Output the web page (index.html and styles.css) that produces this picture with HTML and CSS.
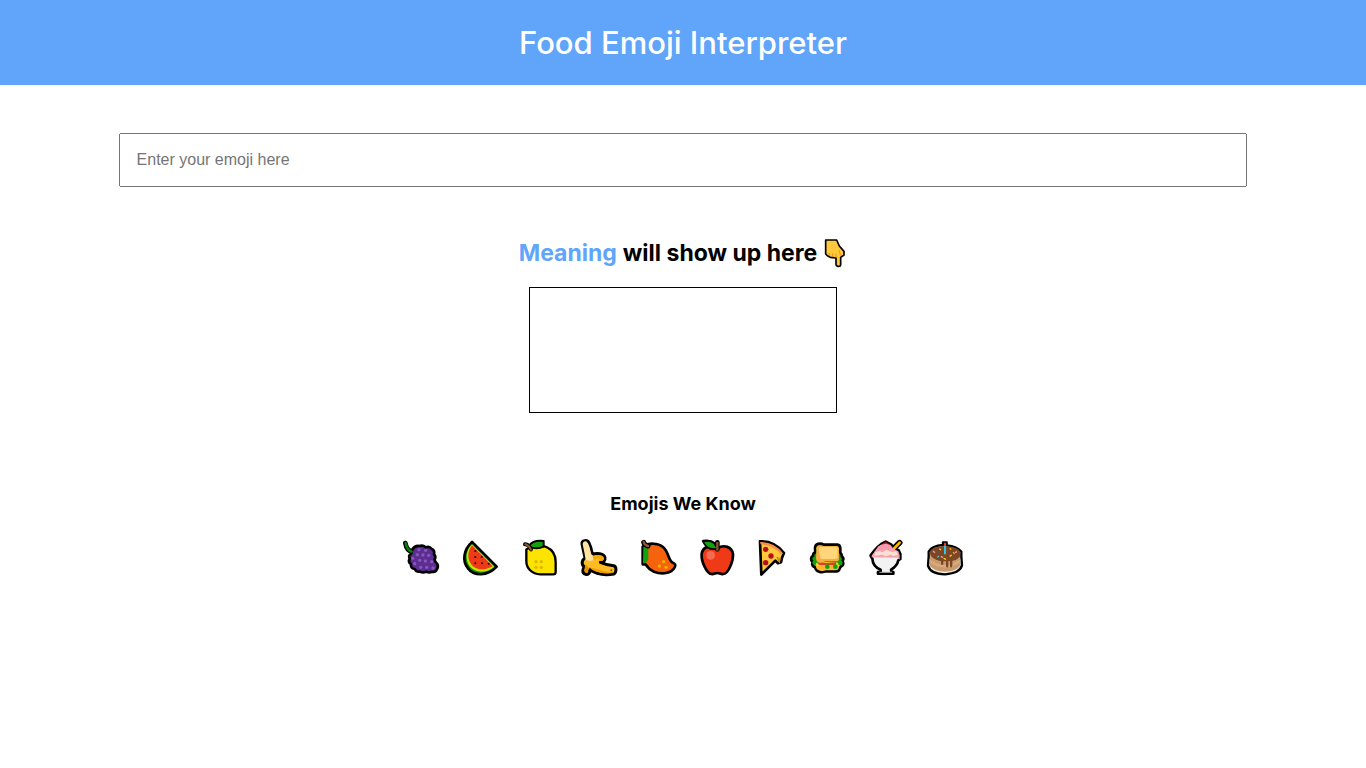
FILE: index.html
```
<!DOCTYPE html>
<html lang="en">
<head>
<meta charset="utf-8">
<meta name="viewport" content="width=device-width, initial-scale=1">
<title>Food Emoji Interpreter</title>
<link rel="stylesheet" href="styles.css">
</head>
<body>
<header class="banner"><h1 class="title">Food Emoji Interpreter</h1></header>
<main class="content">
  <input class="emoji-input" type="text" placeholder="Enter your emoji here" aria-label="Enter your emoji here">
  <h2 class="meaning"><span class="accent">Meaning</span> will show up here
    <svg class="hand" viewBox="966 36 72 90" role="img" aria-label="pointing down"><path d="M974 42H1007L1015 60 1029 76V87L1019 94V116Q1019 121 1012 121 1005 121 1005 115V96L988 94 980 90 974 84Z" fill="#ffc83d" stroke="#000" stroke-width="5" stroke-linejoin="round"/><path d="M985 80v11M995 82v11M1005 83v12M1014 72l5 16" stroke="#d67d00" stroke-width="2" fill="none"/></svg>
  </h2>
  <output class="result" aria-label="Meaning"></output>
  <h3 class="known">Emojis We Know</h3>
  <div class="emoji-list">
    <button class="emoji" type="button" aria-label="Grapes"><svg viewBox="9 12 144 144"><path d="M51 65Q35 62 31 39" fill="none" stroke="#000" stroke-width="14" stroke-linecap="round"/><path d="M52 58Q61 45 73 48 84 44 92 52 104 48 110 57 120 61 117 73 124 79 119 89 119 95 127 102 131 111 125 119 121 128 111 125 104 129 94 125 84 130 75 125 64 127 59 117 46 115 48 103 38 95 44 86 39 75 49 71Z" fill="#5c2e91" stroke="#000" stroke-width="8" stroke-linejoin="round"/><path d="M50 65Q36 61 32 39" fill="none" stroke="#008500" stroke-width="7" stroke-linecap="round"/><g fill="#8a55bd"><circle cx="72" cy="59" r="5"/><circle cx="92" cy="61" r="5"/><circle cx="67" cy="74" r="5"/><circle cx="84" cy="75" r="5"/><circle cx="101" cy="76" r="5"/><circle cx="53" cy="85" r="5"/><circle cx="74" cy="91" r="5"/><circle cx="91" cy="93" r="5"/><circle cx="110" cy="95" r="5"/><circle cx="59" cy="101" r="5"/><circle cx="77" cy="112" r="5"/><circle cx="95" cy="112" r="5"/><circle cx="114" cy="114" r="5"/></g></svg></button>
    <button class="emoji" type="button" aria-label="Watermelon"><svg viewBox="183 12 144 144"><path d="M231 36 305 110C277 140 237 139 219 115 201 93 205 60 231 36Z" fill="#008c1a" stroke="#000" stroke-width="8" stroke-linejoin="round"/><path d="M231 43 298 110C274 131 240 130 224 109 210 90 211 63 231 43Z" fill="#c5e600"/><path d="M231 46 293 109C270 123 245 121 230 105 216 89 217 65 231 46Z" fill="#f03a17"/><g fill="#000"><circle cx="241" cy="63" r="3"/><circle cx="241" cy="81" r="3"/><circle cx="260" cy="81" r="3"/><circle cx="241" cy="100" r="3"/><circle cx="261" cy="100" r="3"/><circle cx="281" cy="101" r="3"/></g></svg></button>
    <button class="emoji" type="button" aria-label="Lemon"><svg viewBox="87 12 144 144"><path d="M124 58C140 46 168 44 184 51 203 59 212 76 212 96V125Q212 133 204 133H166C140 132 124 114 124 94Z" fill="#fde300" stroke="#000" stroke-width="7" stroke-linejoin="round"/><path d="M132 47Q145 29 176 33V50Q155 60 132 50Z" fill="#13a10e" stroke="#000" stroke-width="6" stroke-linejoin="round"/><path d="M120 43Q132 44 138 58" fill="none" stroke="#000" stroke-width="12" stroke-linecap="round"/><path d="M121 43Q132 46 138 59" fill="none" stroke="#8e562e" stroke-width="6" stroke-linecap="round"/><g fill="#e0b800"><circle cx="153" cy="95" r="5"/><circle cx="169" cy="95" r="5"/><circle cx="153" cy="112" r="5"/><circle cx="169" cy="112" r="5"/></g></svg></button>
    <button class="emoji" type="button" aria-label="Banana"><svg viewBox="6 12 144 144"><path d="M36 42C35 30 52 28 57 39Q64 52 67 73C80 68 102 70 105 83 107 93 98 99 91 97Q110 105 131 107C141 109 139 128 132 132 105 137 77 132 59 118 61 128 56 136 47 133 33 129 40 114 43 110 34 104 34 91 45 84Z" fill="#ffba24" stroke="#000" stroke-width="9" stroke-linejoin="round"/><path d="M38 43Q39 33 48 34C58 40 60 58 64 73L73 80 71 91 59 93 47 90 44 72Z" fill="#ffe3a1"/><path d="M68 79C84 71 100 76 102 84 103 91 96 95 92 91 91 85 79 85 71 92Z" fill="#f7a900"/><path d="M46 103 59 116Q52 119 53 128 44 130 43 120Z" fill="#e59200"/><path d="M59 112Q92 123 132 129 95 134 66 119Z" fill="#ef9d00"/><circle cx="124" cy="121" r="3" fill="#7a4b10"/></svg></button>
    <button class="emoji" type="button" aria-label="Mango"><svg viewBox="0 12 144 144"><path d="M38 50C57 37 84 39 99 51 117 66 114 91 128 98 136 102 138 105 134 112 124 131 95 134 72 125 59 119 51 110 47 103H38Z" fill="#f7630c" stroke="#000" stroke-width="8" stroke-linejoin="round"/><path d="M40 51Q58 46 55 63V86Q50 101 39 100Z" fill="#13a10e"/><path d="M41 37Q43 45 54 48" fill="none" stroke="#000" stroke-width="15" stroke-linecap="round"/><path d="M41 36Q43 45 54 48" fill="none" stroke="#8e562e" stroke-width="7" stroke-linecap="round"/><g fill="#f2b000"><circle cx="101" cy="95" r="5"/><circle cx="88" cy="108" r="5"/><circle cx="108" cy="112" r="5"/></g></svg></button>
    <button class="emoji" type="button" aria-label="Red apple"><svg viewBox="-6 12 144 144"><path d="M82 54C103 43 125 50 129 72 130 96 113 134 99 132 94 134 88 129 82 129 76 129 70 134 65 132 51 132 33 95 35 72 38 50 61 43 82 54Z" fill="#f03a17" stroke="#000" stroke-width="8"/><path d="M39 33Q61 29 75 40L79 55Q53 62 39 33Z" fill="#13a10e" stroke="#000" stroke-width="7" stroke-linejoin="round"/><path d="M82 58V37" stroke="#000" stroke-width="14" stroke-linecap="round"/><path d="M79 54Q54 59 43 37 65 34 79 54" fill="#13a10e"/><path d="M82 62V36" stroke="#8e562e" stroke-width="7"/><circle cx="62" cy="76" r="13" fill="#f36b50"/></svg></button>
    <button class="emoji" type="button" aria-label="Pizza"><svg viewBox="3 12 144 144"><path d="M45 34Q88 32 117 69L111 83 108 97 99 100 91 92 49 134Z" fill="#ffc83d" stroke="#000" stroke-width="8" stroke-linejoin="round"/><path d="M45 36Q88 36 114 70L109 74Q84 44 47 43Z" fill="#f78d4a"/><path d="M96 81L103 94 105 83" stroke="#d18b00" stroke-width="5" fill="none"/><g fill="#b90d1a"><circle cx="62" cy="58" r="8"/><circle cx="78" cy="78" r="8"/><circle cx="62" cy="98" r="8"/></g></svg></button>
    <button class="emoji" type="button" aria-label="Sandwich"><svg viewBox="12 12 144 144"><path d="M45 55C45 40 62 38 71 44H112Q121 45 121 56V68Q126 73 126 80 133 85 128 93 132 101 127 107 121 110 119 116 117 124 109 124H78C64 129 48 125 46 113 37 109 35 103 38 96 30 89 33 80 39 77Q39 70 46 67Z" fill="#13a10e" stroke="#000" stroke-width="8" stroke-linejoin="round"/><path d="M48 102H119L115 117Q112 121 107 121H77C65 126 50 121 48 111Z" fill="#ffb52e"/><path d="M47 99Q82 93 119 99V107H47Z" fill="#ffd21f"/><path d="M52 99Q60 94 76 99L108 97V105H58Z" fill="#e8382d"/><g fill="#13a10e"><circle cx="82" cy="110" r="7"/><circle cx="106" cy="110" r="7"/><circle cx="121" cy="99" r="7"/><circle cx="43" cy="98" r="6"/></g><path d="M49 58C47 45 60 43 70 48H110Q118 49 117 60V86Q117 94 109 94H76C63 102 49 98 48 86Z" fill="#f7ae40"/><path d="M56 58Q56 51 67 51H107Q114 52 113 60V80Q113 87 106 87H68Q60 88 60 80Z" fill="#ffd679"/></svg></button>
    <button class="emoji" type="button" aria-label="Shaved ice"><svg viewBox="6 12 144 144"><path d="M99 57 119 38" stroke="#000" stroke-width="17" stroke-linecap="round"/><path d="M32 76 43 62 52 52 64 42 77 35 93 43 102 55 116 61 121 72V87L115 91C112 106 102 114 93 119L95 126H100V131H54V126H62V119C48 114 38 102 37 86L32 78Z" fill="#f2f2f2" stroke="#000" stroke-width="8" stroke-linejoin="round"/><path d="M101 57 119 38" stroke="#ffb900" stroke-width="8" stroke-linecap="round"/><path d="M35 77 47 60 54 50 67 42 78 38 91 45 101 57 115 64 119 76V89L114 83 35 82Z" fill="#f5a3b2"/><path d="M46 67 57 62 68 67 79 59 95 66 109 64 114 75 101 78 91 74 78 79 66 74 43 77Z" fill="#fae0d1"/><path d="M64 44 77 35 91 45 78 41Z" fill="#c50f1f"/><path d="M54 51 62 45 89 46 99 57 91 56 83 61 75 54 67 60 60 56 55 66Z" fill="#f599ac"/><path d="M58 127H96" stroke="#aaa" stroke-width="3"/></svg></button>
    <button class="emoji" type="button" aria-label="Birthday cake"><svg viewBox="15 12 144 144"><path d="M41 65Q51 47 84 45V37H95V46Q127 49 139 65V80L141 106Q135 130 90 133 46 132 39 107L41 80Z" fill="#f2f2f2" stroke="#000" stroke-width="7" stroke-linejoin="round"/><path d="M45 73V108Q58 125 90 125 123 125 135 108V73Z" fill="#c99a6d"/><path d="M44 87Q60 104 90 104 119 103 136 87V97Q119 111 91 113 60 112 44 97Z" fill="#d6aa7e"/><path d="M43 67Q49 49 90 48 131 50 137 67L134 81Q125 91 112 92V108Q108 117 105 108V93H100V109Q96 118 93 108V94H85V103Q79 108 78 101V94Q49 89 43 67Z" fill="#7d4624"/><path d="M90 46V73" stroke="#31c5e8" stroke-width="6"/><path d="M90 38V48" stroke="#f03a17" stroke-width="6"/><g stroke-width="4"><path d="M54 63l6 5M120 68l6-3M78 79l6 4" stroke="#f599ac"/><path d="M73 56l5 4M104 79l6-4M86 85l7 3" stroke="#ffd21f"/><path d="M104 55l5 4M114 67l5 4" stroke="#f7a900"/><path d="M67 82l5-4" stroke="#46c9dc"/></g></svg></button>
  </div>
</main>
</body>
</html>
```
FILE: styles.css
```
body {
  margin: 0;
  background: #fff;
  color: #000;
  font-family: Inter, Roboto, sans-serif;
  text-align: center;
}
.banner {
  padding: 24px 16px;
  background: #60a5fa;
  color: #fff;
}
.title {
  margin: 0;
  font-size: 31px;
  line-height: 37px;
  font-weight: 500;
}
.content {
  display: flex;
  flex-direction: column;
  align-items: center;
  padding: 48px 0;
}
.emoji-input {
  box-sizing: content-box;
  width: 80%;
  height: 18px;
  padding: 16px;
  font-family: "Liberation Sans", Arial, sans-serif;
  font-size: 16px;
}
.meaning {
  display: flex;
  align-items: center;
  gap: 6px;
  margin: 48px 0 16px;
  font-size: 23px;
  line-height: 36px;
  font-weight: 700;
}
.accent {
  color: #60a5fa;
}
.hand {
  width: 24px;
  height: 30px;
}
.result {
  box-sizing: content-box;
  width: 20%;
  min-height: 92px;
  padding: 16px;
  border: 1px solid #000;
}
.known {
  margin: 80px 0 19px;
  font-size: 18px;
  line-height: 22px;
  font-weight: 700;
}
.emoji-list {
  display: flex;
  flex-wrap: wrap;
  justify-content: center;
  gap: 10px;
}
.emoji {
  width: 48px;
  height: 48px;
  padding: 0;
  border: 0;
  background: none;
  cursor: pointer;
}
.emoji svg {
  display: block;
  width: 100%;
  height: 100%;
}
```
